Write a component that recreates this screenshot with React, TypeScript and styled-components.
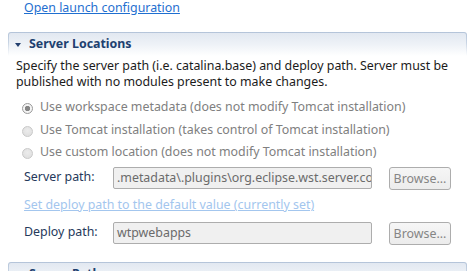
import React from "react";
import styled, { createGlobalStyle } from "styled-components";

const Global = createGlobalStyle`
  html, body { margin: 0; padding: 0; background: #fff; }
  body {
    font-family: "Noto Sans", "Open Sans", sans-serif;
    font-size: 12.4px;
    line-height: 16px;
    color: #1b1b1b;
  }
  * { box-sizing: border-box; }
`;

const Page = styled.div`
  width: 476px;
  height: 271px;
  overflow: hidden;
  display: flex;
  flex-direction: column;
`;

const TopLink = styled.a`
  margin-left: 24px;
  align-self: flex-start;
  color: #1f6fd0;
  text-decoration: underline;
  cursor: pointer;
`;

const SectionFrame = styled.div<{ $top: number }>`
  margin: ${(p) => p.$top}px 9px 0 8px;
  padding: 1px 1px 0;
  border-radius: 3px 3px 0 0;
  background: linear-gradient(to bottom, #b4c4d9 0%, #c9d5e4 45%, rgba(255, 255, 255, 0) 100%);
  flex-shrink: 0;
`;

const HeaderBar = styled.div`
  height: 23px;
  display: flex;
  align-items: flex-start;
  padding: 3px 0 0 6px;
  border-radius: 2px 2px 0 0;
  background: linear-gradient(to bottom, #e2e8f1 0%, #eef2f7 50%, #ffffff 100%);
`;

const Twistie = styled.span`
  width: 0;
  height: 0;
  margin: 7px 8px 0 0;
  border-left: 3.5px solid transparent;
  border-right: 3.5px solid transparent;
  border-top: 4px solid #233f6e;
`;

const HeaderTitle = styled.span`
  font-weight: 700;
  color: #20406f;
`;

const Description = styled.div`
  margin: 2px 0 0 16px;
  white-space: nowrap;
  color: #1b1b1b;
`;

const RadioList = styled.div`
  margin: 9px 0 0 22px;
  display: flex;
  flex-direction: column;
  gap: 6.5px;
`;

const RadioRow = styled.div`
  display: flex;
  align-items: flex-start;
  height: 16px;
  color: #808080;
  white-space: nowrap;
`;

const RadioDot = styled.span<{ $checked?: boolean }>`
  width: 11px;
  height: 11px;
  margin: 4px 7px 0 0;
  border-radius: 50%;
  border: 1px solid ${(p) => (p.$checked ? "#9a9a9a" : "#c9c9c9")};
  background: ${(p) =>
    p.$checked
      ? "radial-gradient(circle, #858585 0, #858585 2.4px, #f4f4f4 3px)"
      : "radial-gradient(circle at 50% 40%, #ececec 0, #dcdcdc 100%)"};
  flex-shrink: 0;
`;

const FieldRow = styled.div<{ $top: number }>`
  margin: ${(p) => p.$top}px 0 0 24px;
  display: grid;
  grid-template-columns: 89px 259px 79px;
  align-items: start;
  height: 23px;
`;

const FieldLabel = styled.span`
  padding-top: 2px;
  color: #26395b;
  white-space: nowrap;
`;

const Field = styled.div`
  height: 22px;
  border: 1px solid #adadad;
  border-radius: 2px;
  background: #f0f0f0;
  color: #6b6b6b;
  padding: 0 3px;
  line-height: 19px;
  white-space: nowrap;
  overflow: hidden;
`;

const BrowseButton = styled.button`
  height: 23px;
  margin-left: 17px;
  border: 1px solid #adadad;
  border-radius: 3px;
  background: linear-gradient(to bottom, #f6f6f6, #ececec);
  color: #858585;
  font: inherit;
  line-height: 19px;
  padding: 0;
`;

const FaintLink = styled.a`
  margin: 7px 0 0 24px;
  align-self: flex-start;
  color: #a3c6ee;
  text-decoration: underline;
  white-space: nowrap;
`;

export default function App() {
  return (
    <>
      <Global />
      <Page>
        <TopLink>Open launch configuration</TopLink>
        <SectionFrame $top={16}>
          <HeaderBar>
            <Twistie />
            <HeaderTitle>Server Locations</HeaderTitle>
          </HeaderBar>
        </SectionFrame>
        <Description>
          Specify the server path (i.e. catalina.base) and deploy path. Server must be
          <br />
          published with no modules present to make changes.
        </Description>
        <RadioList>
          <RadioRow>
            <RadioDot $checked />
            Use workspace metadata (does not modify Tomcat installation)
          </RadioRow>
          <RadioRow>
            <RadioDot />
            Use Tomcat installation (takes control of Tomcat installation)
          </RadioRow>
          <RadioRow>
            <RadioDot />
            Use custom location (does not modify Tomcat installation)
          </RadioRow>
        </RadioList>
        <FieldRow $top={7}>
          <FieldLabel>Server path:</FieldLabel>
          <Field>.metadata\.plugins\org.eclipse.wst.server.co</Field>
          <BrowseButton disabled>Browse...</BrowseButton>
        </FieldRow>
        <FaintLink>Set deploy path to the default value (currently set)</FaintLink>
        <FieldRow $top={9}>
          <FieldLabel>Deploy path:</FieldLabel>
          <Field>wtpwebapps</Field>
          <BrowseButton disabled>Browse...</BrowseButton>
        </FieldRow>
        <SectionFrame $top={17}>
          <HeaderBar>
            <Twistie />
            <HeaderTitle>Server Paths</HeaderTitle>
          </HeaderBar>
        </SectionFrame>
      </Page>
    </>
  );
}
